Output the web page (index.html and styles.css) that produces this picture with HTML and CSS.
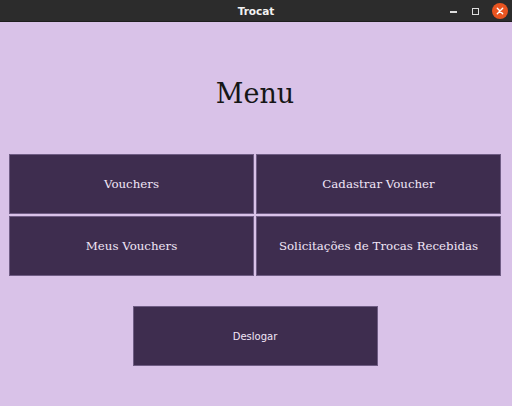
FILE: index.html
```html
<!DOCTYPE html>
<html>
<head>
<meta charset="utf-8">
<link rel="stylesheet" href="styles.css">
</head>
<body>
<div class="titlebar">
  <span class="title">Trocat</span>
  <div class="controls">
    <span class="min"></span>
    <span class="max"></span>
    <span class="close">
      <svg width="16" height="16" viewBox="0 0 16 16"><circle cx="8" cy="8" r="8" fill="#e95420"/><path d="M5.3 5.3 L10.7 10.7 M10.7 5.3 L5.3 10.7" stroke="#fff" stroke-width="1.4" stroke-linecap="round"/></svg>
    </span>
  </div>
</div>
<main class="content">
  <h1 class="heading">Menu</h1>
  <div class="grid">
    <button class="btn">Vouchers</button>
    <button class="btn">Cadastrar Voucher</button>
    <button class="btn">Meus Vouchers</button>
    <button class="btn">Solicitações de Trocas Recebidas</button>
  </div>
  <div class="logout-row">
    <button class="btn logout">Deslogar</button>
  </div>
</main>
</body>
</html>
```
FILE: styles.css
```css
html, body {
  margin: 0;
  padding: 0;
}
body {
  width: 512px;
  height: 406px;
  background: #d9c2e8;
  overflow: hidden;
}
.titlebar {
  height: 22px;
  background: #2c2c2c;
  border-bottom: 1px solid #1e1e1e;
  box-sizing: border-box;
  display: flex;
  align-items: center;
  justify-content: center;
  position: relative;
}
.title {
  color: #f2f2f2;
  font-family: "DejaVu Sans", sans-serif;
  font-weight: bold;
  font-size: 10.5px;
}
.controls {
  position: absolute;
  right: 4px;
  top: 3px;
  display: flex;
  align-items: center;
  gap: 0;
}
.min {
  width: 7px;
  height: 2px;
  background: #ddd;
  margin-right: 15px;
  margin-top: 2px;
}
.max {
  width: 5px;
  height: 5px;
  border: 1.5px solid #ddd;
  margin-right: 13px;
}
.close svg {
  display: block;
}
.content {
  padding: 0 11px 0 9px;
}
.heading {
  margin: 0;
  padding-top: 54px;
  height: 80px;
  box-sizing: border-box;
  text-align: center;
  font-family: "DejaVu Serif", serif;
  font-weight: normal;
  font-size: 27px;
  line-height: 36px;
  color: #161616;
}
.grid {
  display: grid;
  grid-template-columns: 245px 245px;
  grid-template-rows: 60px 60px;
  gap: 2px;
  margin-top: 52px;
}
.btn {
  background: #3e2d4f;
  border: 1px solid #6f5c84;
  color: #f1e6f7;
  font-family: "DejaVu Serif", serif;
  font-size: 11.8px;
  padding: 0;
  margin: 0;
  box-sizing: border-box;
}
.logout-row {
  display: flex;
  justify-content: center;
  margin-top: 30px;
}
.logout {
  width: 245px;
  height: 60px;
  font-family: "DejaVu Sans", sans-serif;
  font-size: 10px;
}
```
